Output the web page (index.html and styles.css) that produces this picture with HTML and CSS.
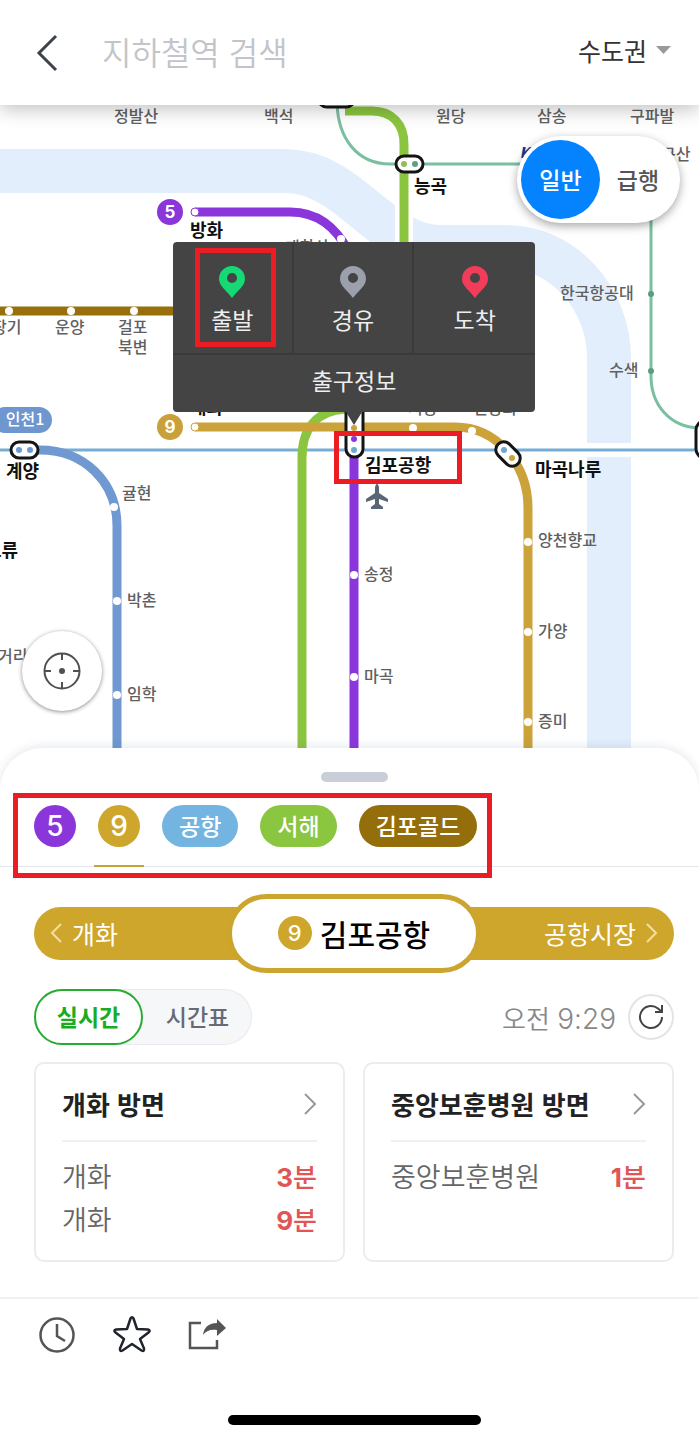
FILE: index.html
```
<!DOCTYPE html>
<html lang="ko">
<head>
  <meta charset="UTF-8">
  <meta name="viewport" content="width=device-width, initial-scale=1">
  <title>지하철 노선도</title>
  <link rel="stylesheet" href="styles.css">
</head>
<body>

  <header class="topbar">
    <button class="back" aria-label="뒤로">
      <svg width="24" height="38" viewBox="0 0 24 38"><path d="M22 2 5 19l17 17" fill="none" stroke="#3d434b" stroke-width="3"/></svg>
    </button>
    <input type="text" class="search" placeholder="지하철역 검색" aria-label="지하철역 검색">
    <div class="region">
      <select aria-label="지역">
        <option>수도권</option>
      </select>
      <svg width="16" height="10" viewBox="0 0 16 10"><path d="M0 1h15L7.500 9z" fill="#999"/></svg>
    </div>
  </header>

  <main class="map">
    <svg class="lines" viewBox="0 105 699 685" preserveAspectRatio="xMinYMin slice">
      <!-- 한강 -->
      <path class="river" d="M0 171H285C350 171 380 247 440 247H505C565 247 609 300 609 358V800"/>
      <path class="gap" d="M404 190V260" stroke-width="18"/>
      <path class="gap" d="M580 450H640" stroke-width="14"/>

      <!-- 노선 -->
      <path class="line thin" stroke="#79bfa0" d="M337 100C337 138 357 164 390 164H560M651 190V376C651 405 670 427 699 428"/>
      <path class="line thin" stroke="#76add6" d="M0 450H699"/>
      <path class="line" stroke="#8bc53f" d="M345 111H372C392 111 404 124 404 144V250M345 409C315 411 302 430 302 458V800"/>
      <path class="line" stroke="#97700c" d="M0 311H180"/>
      <path class="line" stroke="#8a36da" d="M195 212H290C318 212 335 227 348 250M354 440V800"/>
      <path class="line" stroke="#cca23b" d="M195 427H455C498 427 528 466 528 508V800"/>
      <path class="line" stroke="#6f99d0" d="M24 450H40C84 450 117 482 117 526V800"/>

      <!-- 역 -->
      <g fill="#fff">
        <circle cx="9" cy="311" r="4"/><circle cx="71" cy="311" r="4"/><circle cx="134" cy="311" r="4"/>
        <circle cx="341" cy="239" r="4"/><circle cx="354" cy="575" r="4"/><circle cx="354" cy="677" r="4"/>
        <circle cx="413" cy="428" r="4"/><circle cx="472" cy="431" r="4"/>
        <circle cx="528" cy="542" r="4"/><circle cx="528" cy="632" r="4"/><circle cx="528" cy="722" r="4"/>
        <circle cx="114" cy="507" r="4"/><circle cx="117" cy="601" r="4"/><circle cx="117" cy="695" r="4"/>
        <circle cx="195" cy="212" r="4" stroke="#8a36da"/><circle cx="195" cy="427" r="4" stroke="#cca23b"/>
      </g>
      <g fill="#5a9e7e"><circle cx="651" cy="294" r="3"/><circle cx="651" cy="371" r="3"/></g>

      <!-- 환승역 -->
      <g class="transfer">
        <rect x="318" y="88" width="37" height="19" rx="9"/>
        <rect x="396" y="156" width="27" height="16" rx="8"/>
        <rect x="11" y="442" width="27" height="16" rx="8"/>
        <rect x="346" y="390" width="17" height="67" rx="8"/>
        <rect x="494" y="446" width="28" height="16" rx="8" transform="rotate(45 508 454)"/>
        <rect x="696" y="421" width="20" height="37" rx="9"/>
      </g>
      <circle cx="404" cy="164" r="3" fill="#93bd55"/><circle cx="415" cy="164" r="3" fill="#5f9f85"/>
      <circle cx="19" cy="450" r="3" fill="#6f99d0"/><circle cx="30" cy="450" r="3" fill="#6f99d0"/>
      <circle cx="354" cy="428" r="3" fill="#cca23b"/><circle cx="354" cy="439" r="3" fill="#8a36da"/><circle cx="354" cy="450" r="3" fill="#6fa8d0"/>
      <circle cx="504" cy="450" r="3" fill="#6fa8d0"/><circle cx="512" cy="458" r="3" fill="#cca23b"/>

      <!-- 노선 번호 -->
      <circle cx="170" cy="212" r="13" fill="#8a36da"/><text class="num" x="170" y="218">5</text>
      <circle cx="170" cy="427" r="13" fill="#c9a03a"/><text class="num" x="170" y="433">9</text>
      <rect x="-8" y="407" width="60" height="26" rx="13" fill="#6f97cf"/><text class="num kr" x="25" y="425">인천1</text>

      <path fill="#596673" d="M377 484c1 0 2 2 2 4v5l9 6v3l-9-3v5l4 3v2h-12v-2l4-3v-5l-9 3v-3l9-6v-5c0-2 1-4 2-4z"/>

      <g class="label">
        <text x="114" y="122">정발산</text><text x="264" y="122">백석</text>
        <text x="436" y="122">원당</text><text x="537" y="122">삼송</text><text x="630" y="122">구파발</text>
        <text x="661" y="160">구산</text><text x="285" y="253">개화산</text>
        <text x="560" y="299">한국항공대</text><text x="609" y="376">수색</text>
        <text x="-8" y="333">장기</text><text x="55" y="333">운양</text><text x="118" y="333">걸포</text><text x="118" y="353">북변</text>
        <text x="122" y="499">귤현</text><text x="127" y="606">박촌</text><text x="127" y="700">임학</text><text x="-2" y="662">거리</text>
        <text x="408" y="414">시장</text><text x="473" y="414">신방화</text>
        <text x="364" y="580">송정</text><text x="364" y="682">마곡</text>
        <text x="538" y="546">양천향교</text><text x="538" y="637">가양</text><text x="538" y="727">증미</text>
      </g>
      <g class="label major">
        <text x="190" y="237">방화</text><text x="414" y="193">능곡</text><text x="190" y="414">개화</text>
        <text x="6" y="478">계양</text><text x="-15" y="557">오류</text>
        <text x="365" y="472">김포공항</text><text x="535" y="476">마곡나루</text>
      </g>
      <text class="ktx" x="521" y="158">KTX</text>
    </svg>

    <div class="mode">
      <button class="on">일반</button>
      <button>급행</button>
    </div>

    <div class="popup">
      <button>
        <svg class="pin" viewBox="0 0 26 32"><path fill="#15d974" fill-rule="evenodd" d="M13 0a13 13 0 0 0-13 13C0 20 8 25 13 32 18 25 26 20 26 13A13 13 0 0 0 13 0zm0 7a5 5 0 1 1 0 10 5 5 0 0 1 0-10z"/></svg>
        출발
        <span class="mark mark-start"></span>
      </button>
      <button>
        <svg class="pin" viewBox="0 0 26 32"><path fill="#9ba0ac" fill-rule="evenodd" d="M13 0a13 13 0 0 0-13 13C0 20 8 25 13 32 18 25 26 20 26 13A13 13 0 0 0 13 0zm0 7a5 5 0 1 1 0 10 5 5 0 0 1 0-10z"/></svg>
        경유
      </button>
      <button>
        <svg class="pin" viewBox="0 0 26 32"><path fill="#f13d5a" fill-rule="evenodd" d="M13 0a13 13 0 0 0-13 13C0 20 8 25 13 32 18 25 26 20 26 13A13 13 0 0 0 13 0zm0 7a5 5 0 1 1 0 10 5 5 0 0 1 0-10z"/></svg>
        도착
      </button>
      <button class="exit">출구정보</button>
    </div>
    <span class="mark mark-station"></span>

    <button class="locate" aria-label="현재 위치">
      <svg width="40" height="40" viewBox="0 0 40 40" fill="none" stroke="#505050" stroke-width="2"><circle cx="20" cy="20" r="17.500"/><path d="M20 3v6M20 31v6M3 20h6M31 20h6"/><circle cx="20" cy="20" r="3" fill="#505050" stroke="none"/></svg>
    </button>
  </main>

  <section class="sheet">
    <div class="handle-row"><div class="handle"></div></div>

    <nav class="tabs">
      <button class="tab round purple">5</button>
      <button class="tab round gold active">9</button>
      <button class="tab sky">공항</button>
      <button class="tab green">서해</button>
      <button class="tab brown">김포골드</button>
      <span class="mark mark-tabs"></span>
    </nav>

    <div class="station">
      <a href="#" class="prev"><svg width="13" height="20" viewBox="0 0 13 20"><path d="M11 1 2 10l9 9"/></svg>개화</a>
      <h1><span class="badge">9</span>김포공항</h1>
      <a href="#" class="next">공항시장<svg width="13" height="20" viewBox="0 0 13 20"><path d="m2 1 9 9-9 9"/></svg></a>
    </div>

    <div class="controls">
      <div class="switch">
        <button class="on">실시간</button>
        <button>시간표</button>
      </div>
      <span class="time">오전 <span class="digits">9:29</span></span>
      <button class="refresh" aria-label="새로고침">
        <svg width="26" height="26" viewBox="0 0 26 26" fill="none" stroke="#444" stroke-width="2"><path d="M24 13A11 11 0 1 1 20 4.500L23 7M24 1v7h-7"/></svg>
      </button>
    </div>

    <div class="cards">
      <article class="card">
        <h2>개화 방면 <svg width="14" height="24" viewBox="0 0 14 24"><path d="m2 2 10 10L2 22"/></svg></h2>
        <p>개화 <span class="min"><b>3</b>분</span></p>
        <p>개화 <span class="min"><b>9</b>분</span></p>
      </article>
      <article class="card">
        <h2>중앙보훈병원 방면 <svg width="14" height="24" viewBox="0 0 14 24"><path d="m2 2 10 10L2 22"/></svg></h2>
        <p>중앙보훈병원 <span class="min"><b>1</b>분</span></p>
      </article>
    </div>
  </section>

  <footer class="bottom">
    <div class="actions">
      <button aria-label="최근">
        <svg width="40" height="40" viewBox="0 0 40 40" fill="none" stroke="#555" stroke-width="2.500"><circle cx="20" cy="20" r="16.500"/><path d="M20 9v12l8 5"/></svg>
      </button>
      <button aria-label="즐겨찾기">
        <svg width="40" height="40" viewBox="0 0 40 40" fill="none" stroke="#20242c" stroke-width="2.500" stroke-linejoin="round"><path d="M18.500 3.500Q20 1 21.500 3.500L25 14 36 14.500Q39 15.500 36.500 17.500L28 24 32 33.500Q32.500 37 29.500 35.500L20 29 10.500 35.500Q7.500 37 8 33.500L12 24 3.500 17.500Q1 15.500 4 14.500L15 14Z"/></svg>
      </button>
      <button aria-label="공유">
        <svg width="40" height="40" viewBox="0 0 40 40"><path d="M14 8H3v25h27v-8" fill="none" stroke="#555" stroke-width="2.500"/><path d="M16 20c1-8 6-12 14-12V4l9 9-9 8v-6c-7-1-11 1-14 5z" fill="#555"/></svg>
      </button>
    </div>
    <div class="home-bar"></div>
  </footer>

</body>
</html>
```
FILE: styles.css
```
* {
  box-sizing: border-box;
}
body {
  margin: 0;
  background: #fff;
  color: #222;
  font-family: "Noto Sans CJK KR", sans-serif;
}
button {
  padding: 0;
  border: none;
  background: none;
  color: inherit;
  font-family: inherit;
  cursor: pointer;
}
svg {
  display: block;
}

/* header */
.topbar {
  position: relative;
  z-index: 2;
  display: flex;
  align-items: center;
  height: 105px;
  padding: 0 27px 0 34px;
  background: #fff;
  box-shadow: 0 4px 18px rgba(0, 0, 0, 0.25);
}
.search {
  flex: 1;
  min-width: 0;
  margin: 0 20px 0 44px;
  padding: 0 0 4px;
  border: none;
  outline: none;
  font: 350 32px/48px "Noto Sans CJK KR", sans-serif;
}
.search::placeholder {
  color: #c3c4c9;
}
.region {
  display: flex;
  align-items: center;
  gap: 8px;
  padding-bottom: 6px;
}
.region select {
  appearance: none;
  padding: 0;
  border: none;
  background: none;
  color: #333;
  font: 400 25px/36px "Noto Sans CJK KR", sans-serif;
}

/* map */
.map {
  position: relative;
  height: 685px;
  overflow: hidden;
}
.lines {
  width: 100%;
  height: 100%;
}
.river {
  fill: none;
  stroke: #e2eefc;
  stroke-width: 44;
}
.gap {
  stroke: #fff;
}
.line {
  fill: none;
  stroke-width: 9;
}
.line.thin {
  stroke-width: 3;
}
.transfer rect {
  fill: #fff;
  stroke: #151515;
  stroke-width: 3;
}
.label {
  font-size: 16px;
  font-weight: 500;
  fill: #606060;
}
.label.major {
  font-size: 18px;
  font-weight: 700;
  fill: #111;
}
.num {
  font: 700 17px Inter, sans-serif;
  fill: #fff;
  text-anchor: middle;
}
.num.kr {
  font: 500 16px "Noto Sans CJK KR", sans-serif;
}
.ktx {
  font: italic 800 15px Inter, sans-serif;
  fill: #123d8c;
}
.mode {
  position: absolute;
  top: 31px;
  right: 19px;
  display: flex;
  padding: 4px;
  border-radius: 44px;
  background: #fff;
  box-shadow: 0 3px 10px rgba(0, 0, 0, 0.35);
}
.mode button {
  width: 76px;
  height: 79px;
  padding-bottom: 2px;
  border-radius: 50%;
  color: #555;
  font-size: 23px;
  font-weight: 500;
}
.mode button.on {
  width: 79px;
  background: #0583ff;
  color: #fff;
}
.popup {
  position: absolute;
  top: 137px;
  left: 173px;
  display: grid;
  grid-template-columns: repeat(3, 1fr);
  grid-template-rows: 111px 59px;
  width: 362px;
  border-radius: 4px;
  background: #444;
}
.popup::after {
  content: "";
  position: absolute;
  top: 100%;
  left: 50%;
  margin-left: -8px;
  border: 8px solid transparent;
  border-top: 13px solid #444;
  border-bottom: none;
}
.popup button {
  position: relative;
  display: flex;
  flex-direction: column;
  align-items: center;
  padding-top: 24px;
  border-right: 2px solid #3a3a3a;
  color: #eee;
  font-size: 23px;
  line-height: 34px;
}
.popup button:nth-child(n + 3) {
  border-right: none;
}
.popup .exit {
  grid-column: 1 / -1;
  padding-top: 8px;
  border-top: 2px solid #3a3a3a;
}
.pin {
  width: 26px;
  height: 32px;
  margin-bottom: 4px;
}
.locate {
  position: absolute;
  top: 526px;
  left: 22px;
  display: grid;
  place-items: center;
  width: 80px;
  height: 80px;
  border-radius: 50%;
  background: #fff;
  box-shadow: 0 1px 4px rgba(0, 0, 0, 0.45);
}

/* red guide boxes */
.mark {
  position: absolute;
  border: 5px solid #eb1c24;
  pointer-events: none;
}
.mark-start {
  inset: 6px 16px 6px 22px;
}
.mark-station {
  top: 326px;
  left: 334px;
  width: 128px;
  height: 53px;
}
.mark-tabs {
  inset: 11px 207px -12px 13px;
}

/* bottom sheet */
.sheet {
  position: relative;
  margin-top: -42px;
  padding-top: 24px;
  border-radius: 42px 42px 0 0;
  background: #fff;
  box-shadow: 0 -2px 10px rgba(60, 70, 120, 0.12);
  clip-path: inset(-20px 0 0 0);
}
.handle-row {
  padding: 0 25px 0 34px;
}
.handle {
  width: 67px;
  height: 10px;
  margin: 0 auto;
  border-radius: 5px;
  background: #c9ced8;
}
.tabs {
  position: relative;
  display: flex;
  gap: 22px;
  padding: 23px 25px 19px 34px;
  border-bottom: 1px solid #e4e5e8;
}
.tab {
  position: relative;
  height: 42px;
  padding: 0 17px 2px;
  border-radius: 21px;
  color: #fff;
  font-size: 23px;
  font-weight: 500;
  white-space: nowrap;
}
.tab.round {
  width: 42px;
  padding: 0;
  font-family: Inter, sans-serif;
  font-size: 28px;
}
.purple { background: #8a36da; }
.gold { background: #cea62c; }
.sky { background: #74b4e1; }
.green { background: #8ac63f; }
.brown { background: #946e0a; }
.tab.active::after {
  content: "";
  position: absolute;
  right: -4px;
  bottom: -20px;
  left: -4px;
  height: 2px;
  background: #c9a03a;
}
.station {
  display: grid;
  grid-template-columns: 1fr 254px 1fr;
  align-items: center;
  height: 53px;
  margin: 40px 25px 0 34px;
  border-radius: 27px;
  background: #cea62c;
}
.station a {
  display: flex;
  align-items: center;
  gap: 9px;
  padding: 0 16px 2px;
  color: #fff;
  font-size: 25px;
  line-height: 36px;
  text-decoration: none;
}
.station a path {
  fill: none;
  stroke: #f4dfa0;
  stroke-width: 2;
}
.station .next {
  justify-content: flex-end;
}
.station h1 {
  display: flex;
  align-items: center;
  justify-content: center;
  gap: 8px;
  height: 79px;
  margin: -13px 0;
  padding-bottom: 2px;
  border: 5px solid #cca52f;
  border-radius: 40px;
  background: #fff;
  color: #000;
  font-size: 30px;
  font-weight: 500;
}
.badge {
  width: 34px;
  border-radius: 50%;
  background: #cea62c;
  color: #fff;
  font: 500 22px/34px Inter, sans-serif;
  text-align: center;
}
.controls {
  display: flex;
  align-items: center;
  margin: 29px 25px 0 34px;
}
.switch {
  display: flex;
  margin-right: auto;
  border-radius: 28px;
  background: #f6f7f9;
  box-shadow: inset 0 0 0 1px #e8eaee;
}
.switch button {
  width: 109px;
  height: 56px;
  padding-bottom: 2px;
  border-radius: 28px;
  color: #666a76;
  font-size: 23px;
  font-weight: 500;
}
.switch button.on {
  border: 2px solid #27ab32;
  background: #fff;
  color: #17ad22;
  font-weight: 700;
}
.time {
  color: #888;
  font-size: 26px;
  font-weight: 350;
}
.digits {
  font-family: Inter, sans-serif;
  font-size: 28px;
}
.refresh {
  display: grid;
  place-items: center;
  width: 46px;
  height: 46px;
  margin-left: 12px;
  border: 2px solid #e3e4e6;
  border-radius: 50%;
}
.cards {
  display: grid;
  grid-template-columns: 1fr 1fr;
  gap: 18px;
  margin: 17px 25px 0 34px;
}
.card {
  min-height: 200px;
  padding: 20px 26px;
  border: 2px solid #ebecef;
  border-radius: 10px;
}
.card h2 {
  display: flex;
  align-items: center;
  justify-content: space-between;
  margin: 0 0 12px;
  padding-bottom: 16px;
  border-bottom: 2px solid #f0f0f2;
  font-size: 26px;
  line-height: 40px;
  font-weight: 700;
  white-space: nowrap;
}
.card h2 path {
  fill: none;
  stroke: #999;
  stroke-width: 2;
}
.card p {
  display: flex;
  justify-content: space-between;
  height: 43px;
  margin: 0;
  color: #666;
  font-size: 27px;
  font-weight: 350;
  line-height: 43px;
}
.min {
  color: #e15555;
  font-size: 26px;
  font-weight: 500;
}
.min b {
  font-family: Inter, sans-serif;
  line-height: 1;
}

/* footer */
.bottom {
  margin-top: 35px;
  padding-bottom: 15px;
  border-top: 2px solid #f0f1f4;
}
.actions {
  display: flex;
  gap: 35px;
  padding: 16px 37px 60px;
}
.home-bar {
  width: 253px;
  height: 10px;
  margin: 0 auto;
  border-radius: 5px;
  background: #000;
}
@media (min-width: 600px) {
  .bottom {
    padding-left: 9px;
  }
  .actions {
    padding-left: 28px;
  }
}
```
